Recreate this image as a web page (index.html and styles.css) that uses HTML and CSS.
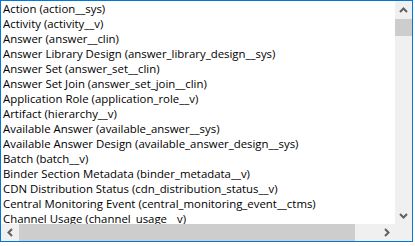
FILE: index.html
```html
<!DOCTYPE html>
<html>
<head>
<meta charset="utf-8">
<link rel="stylesheet" href="styles.css">
</head>
<body>
<div class="listbox">
  <div class="viewport">
    <ul class="items">
      <li>Action (action__sys)</li>
      <li>Activity (activity__v)</li>
      <li>Answer (answer__clin)</li>
      <li>Answer Library Design (answer_library_design__sys)</li>
      <li>Answer Set (answer_set__clin)</li>
      <li>Answer Set Join (answer_set_join__clin)</li>
      <li>Application Role (application_role__v)</li>
      <li>Artifact (hierarchy__v)</li>
      <li>Available Answer (available_answer__sys)</li>
      <li>Available Answer Design (available_answer_design__sys)</li>
      <li>Batch (batch__v)</li>
      <li>Binder Section Metadata (binder_metadata__v)</li>
      <li>CDN Distribution Status (cdn_distribution_status__v)</li>
      <li>Central Monitoring Event (central_monitoring_event__ctms)</li>
      <li>Channel Usage (channel_usage__v)</li>
    </ul>
  </div>
  <div class="vscroll">
    <div class="arrow">
      <svg width="9" height="6" viewBox="0 0 9 6"><polyline points="1,5 4.5,1.5 8,5" fill="none" stroke="#606060" stroke-width="2"/></svg>
    </div>
    <div class="vtrack"><div class="vthumb"></div></div>
    <div class="arrow">
      <svg width="9" height="6" viewBox="0 0 9 6"><polyline points="1,1 4.5,4.5 8,1" fill="none" stroke="#606060" stroke-width="2"/></svg>
    </div>
  </div>
  <div class="hscroll">
    <div class="arrow">
      <svg width="6" height="9" viewBox="0 0 6 9"><polyline points="5,1 1.5,4.5 5,8" fill="none" stroke="#606060" stroke-width="2"/></svg>
    </div>
    <div class="htrack"><div class="hthumb"></div></div>
    <div class="arrow">
      <svg width="6" height="9" viewBox="0 0 6 9"><polyline points="1,1 4.5,4.5 1,8" fill="none" stroke="#606060" stroke-width="2"/></svg>
    </div>
  </div>
  <div class="corner"></div>
</div>
</body>
</html>
```

FILE: styles.css
```css
html, body {
  margin: 0;
  padding: 0;
  background: #ffffff;
}
body {
  width: 415px;
  height: 246px;
  overflow: hidden;
}
.listbox {
  box-sizing: border-box;
  width: 413px;
  height: 242px;
  border: 1px solid #0078d7;
  display: grid;
  grid-template-columns: 394px 17px;
  grid-template-rows: 223px 17px;
  background: #fff;
}
.viewport {
  overflow: hidden;
}
.items {
  list-style: none;
  margin: 0;
  padding: 0;
  font-family: "Open Sans", sans-serif;
  font-size: 11.4px;
  color: #000;
}
.items li {
  height: 15px;
  line-height: 15px;
  padding-left: 2px;
  white-space: nowrap;
}
.vscroll {
  background: #f0f0f0;
  display: flex;
  flex-direction: column;
}
.hscroll {
  background: #f0f0f0;
  display: flex;
}
.arrow {
  width: 17px;
  height: 17px;
  flex: none;
  display: flex;
  align-items: center;
  justify-content: center;
}
.vtrack {
  flex: 1;
  padding-top: 1px;
}
.vthumb {
  width: 17px;
  height: 17px;
  background: #cdcdcd;
}
.htrack {
  flex: 1;
}
.hthumb {
  width: 336px;
  height: 17px;
  background: #cdcdcd;
  margin-left: 1px;
}
.corner {
  background: #f0f0f0;
}
```
